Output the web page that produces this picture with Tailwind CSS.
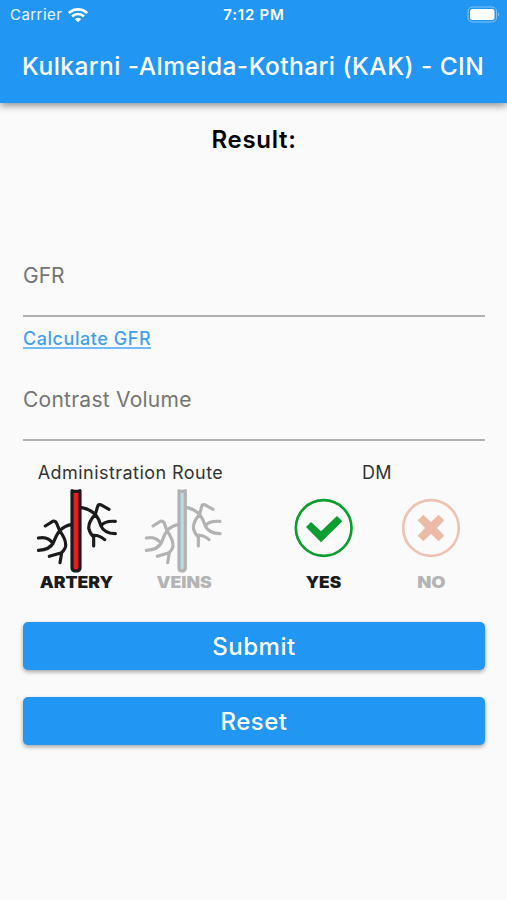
<!DOCTYPE html>
<html lang="en">
<head>
    <meta charset="UTF-8">
    <meta name="viewport" content="width=device-width, initial-scale=1.0">
    <title>Kulkarni-Almeida-Kothari (KAK) - CIN</title>
    <script src="https://cdn.jsdelivr.net/npm/@tailwindcss/browser@4"></script>
</head>
<body class="bg-[#fafafa] h-[900px] overflow-hidden font-['Inter',sans-serif]">
    <header class="h-[103px] bg-[#2196f3] text-white shadow-[0_3px_7px_rgba(0,0,0,0.4)]">
        <!-- Status bar -->
        <div class="grid grid-cols-3 items-center h-[30px] pl-[10px] pr-[7px] text-[15px]">
            <div class="flex items-center gap-[6px] text-white/90">
                <span class="tracking-[0.45px]">Carrier</span>
                <svg class="w-[20px] h-[15px]" viewBox="0 0 60 45" fill="none" stroke="#fff" stroke-width="8">
                    <path d="M2.500 15.500a39 39 0 0 1 55 0"/>
                    <path d="M12 25.500a25.500 25.500 0 0 1 36 0"/>
                    <path d="M30 43l-9.500-9.500a13.500 13.500 0 0 1 19 0z" fill="#fff" stroke="none"/>
                </svg>
            </div>
            <span class="text-center font-semibold tracking-[0.8px] -ml-[2px]">7:12 PM</span>
            <div class="flex justify-end">
                <svg class="w-[33px] h-[17px] -mt-[2px]" viewBox="0 0 33 17">
                    <rect x="1" y="1" width="28.500" height="15" rx="4.500" fill="none" stroke="#fff" stroke-opacity=".45"/>
                    <rect x="3" y="3" width="24.500" height="11" rx="2.500" fill="#fff"/>
                    <path d="M31 6.500a2.500 2.500 0 0 1 0 4z" fill="#fff" fill-opacity=".5"/>
                </svg>
            </div>
        </div>
        <h1 class="pl-[22px] pt-[18px] text-[24.500px] leading-[36px] font-medium whitespace-nowrap tracking-[0.45px]">Kulkarni -Almeida-Kothari (KAK) - CIN</h1>
    </header>

    <main class="pl-[23px] pr-[22px] pt-[22px]">
        <h2 class="h-[131px] text-center text-[24px] leading-[30px] font-semibold text-black tracking-[0.7px]">Result:</h2>

        <div class="h-[61px] pt-[5px] border-b-2 border-[#b0b0b0] text-[21px] leading-[30px] text-[#757575]">GFR</div>
        <a href="#" class="block w-max mt-[8px] h-[24px] border-b-2 border-[#74bcf6] text-[18px] leading-[27px] font-medium text-[#419fee] tracking-[0.55px]">Calculate GFR</a>
        <div class="mt-[31px] h-[61px] pt-[5px] border-b-2 border-[#b0b0b0] text-[21px] leading-[30px] text-[#757575] tracking-[0.25px]">Contrast Volume</div>

        <div class="flex h-[181px] pt-[20px] text-[#333]">
            <section class="w-[215px] shrink-0">
                <h3 class="text-center text-[18px] leading-[24px] tracking-[0.45px]">Administration Route</h3>
                <div class="flex mt-[3px]">
                    <button class="flex flex-col items-center w-[108px]">
                        <svg class="w-[80px] h-[86px]" viewBox="51 99 240 258" fill="none" stroke="#1c1a1a" stroke-width="9.500" stroke-linecap="round" stroke-linejoin="round">
                            <path d="M182 157Q208 161 226 178Q238 193 243 213Q252 235 286 236M243 213Q252 197 286 199M226 178L233 154Q235 147 242 149L267 163M226 178Q206 199 206 219Q209 235 221 246L221 273M217 241Q237 239 254 254"/>
                            <path d="M153 209Q135 212 119 227Q109 239 101 261Q90 285 55 286M99 266Q85 243 55 249M119 227L109 203Q105 197 98 199L76 213M119 227Q137 252 137 269Q138 280 125 293L88 304M125 293L120 323"/>
                            <path d="M156 107Q168 111 180 107V339Q179 348 168 348T156 339Z" fill="#ed1c24"/>
                        </svg>
                        <span class="text-[16px] leading-[16px] font-black text-[#1c1a1a] scale-x-110">ARTERY</span>
                    </button>
                    <button class="flex flex-col items-center w-[108px]">
                        <svg class="w-[80px] h-[86px]" viewBox="46 99 240 258" fill="none" stroke="#b2b2b2" stroke-width="9.500" stroke-linecap="round" stroke-linejoin="round">
                            <path d="M172 157Q196 161 213 178Q224 193 230 213Q240 235 274 236M230 213Q240 197 274 199M213 178L219 154Q221 147 228 149L253 163M213 178Q194 199 194 219Q197 235 209 246L209 273M205 241Q225 239 241 254"/>
                            <path d="M148 209Q130 212 115 227Q107 239 99 261Q88 285 53 286M97 266Q83 243 53 249M115 227L106 203Q102 197 95 199L73 213M115 227Q132 252 133 269Q134 280 122 293L86 304M122 293L117 323"/>
                            <path d="M151 107Q160 111 170 107V339Q169 348 160 348T151 339Z" fill="#b8dce5"/>
                        </svg>
                        <span class="text-[16px] leading-[16px] font-black text-[#b4b4b4] scale-x-110">VEINS</span>
                    </button>
                </div>
            </section>
            <section class="w-[216px] ml-[31px] shrink-0">
                <h3 class="text-center text-[18px] leading-[24px] tracking-[0.3px]">DM</h3>
                <div class="flex mt-[13px]">
                    <button class="flex flex-col items-center w-[109px]">
                        <svg class="w-[60px] h-[60px]" viewBox="43 130 180 180">
                            <circle cx="132" cy="220" r="83.500" fill="none" stroke="#0c9d31" stroke-width="8"/>
                            <path d="M79 217L94 202L124 230L172 184L188 200L124 263Z" fill="#0c9d31"/>
                        </svg>
                        <span class="mt-[16px] text-[16px] leading-[16px] font-black text-[#1c1a1a] scale-x-108">YES</span>
                    </button>
                    <button class="flex flex-col items-center w-[107px]">
                        <svg class="w-[60px] h-[60px]" viewBox="367 130 180 180">
                            <circle cx="454" cy="220" r="83.500" fill="none" stroke="#ecc3b3" stroke-width="8"/>
                            <path d="M431 180L454 202L477 180L494 197L472 220L494 243L477 260L454 238L431 260L414 243L436 220L414 197Z" fill="#ecbba8"/>
                        </svg>
                        <span class="mt-[16px] text-[16px] leading-[16px] font-black text-[#b4b4b4] scale-x-115">NO</span>
                    </button>
                </div>
            </section>
        </div>

        <div class="flex flex-col gap-[27px] text-[24px] font-medium text-white tracking-[0.5px]">
            <button class="h-[48px] pt-px rounded-[5px] bg-[#2196f3] shadow-[0_2px_4px_rgba(0,0,0,0.35)]">Submit</button>
            <button class="h-[48px] pt-px rounded-[5px] bg-[#2196f3] shadow-[0_2px_4px_rgba(0,0,0,0.35)]">Reset</button>
        </div>
    </main>
</body>
</html>
